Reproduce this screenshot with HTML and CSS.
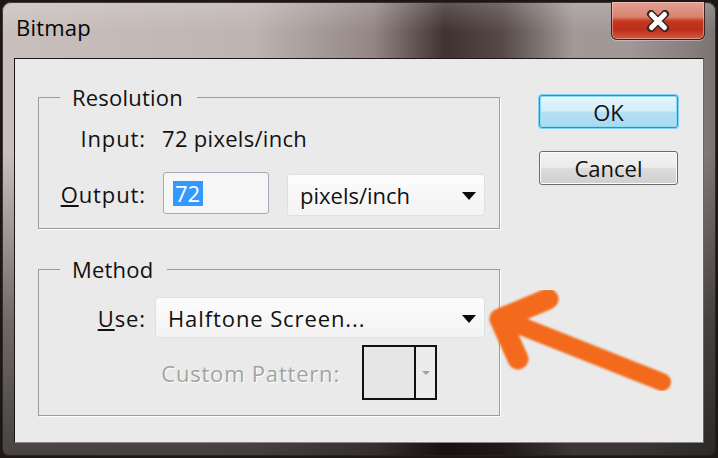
FILE: index.html
```html
<!DOCTYPE html>
<html>
<head>
<meta charset="utf-8">
<title>Bitmap</title>
<link rel="stylesheet" href="styles.css">
</head>
<body>
<div class="window">
  <div class="titlebar">
    <span class="title">Bitmap</span>
    <div class="close">
      <svg width="26" height="22" viewBox="0 0 26 22">
        <path d="M6 4 L20 18 M20 4 L6 18" stroke="#3b2522" stroke-width="8" stroke-linecap="round" fill="none"/>
        <path d="M6.5 4.5 L19.5 17.5 M19.5 4.5 L6.5 17.5" stroke="#ffffff" stroke-width="5" stroke-linecap="round" fill="none"/>
      </svg>
    </div>
  </div>
  <div class="client">
    <div class="groups">
      <fieldset class="group res">
        <legend>Resolution</legend>
        <div class="row input-row">
          <span class="lbl">Input:</span>
          <span class="val">72 pixels/inch</span>
        </div>
        <div class="row output-row">
          <span class="lbl"><u>O</u>utput:</span>
          <div class="textbox"><span class="sel">72</span></div>
          <div class="dropdown units"><span>pixels/inch</span><span class="caret"></span></div>
        </div>
      </fieldset>
      <fieldset class="group method">
        <legend>Method</legend>
        <div class="row use-row">
          <span class="lbl"><u>U</u>se:</span>
          <div class="dropdown use"><span class="usetext">Halftone Screen...</span><span class="caret"></span></div>
        </div>
        <div class="row pattern-row">
          <span class="plbl">Custom Pattern:</span>
          <div class="pattern">
            <div class="swatch"></div>
            <div class="pbtn"><span class="mini-caret"></span></div>
          </div>
        </div>
      </fieldset>
    </div>
    <div class="buttons">
      <div class="btn ok">OK</div>
      <div class="btn cancel">Cancel</div>
    </div>
  </div>
</div>
<svg class="arrow" width="718" height="458" viewBox="0 0 718 458">
  <defs>
    <filter id="soft" x="-10%" y="-10%" width="120%" height="120%"><feGaussianBlur stdDeviation="1.3"/></filter>
  </defs>
  <g fill="none" stroke="#f36a1a" stroke-linecap="round" stroke-linejoin="round" filter="url(#soft)">
    <path d="M548 299 L500 319 L518 359" stroke-width="21"/>
    <path d="M506 320 L662 382" stroke-width="18"/>
  </g>
</svg>
</body>
</html>
```

FILE: styles.css
```css
html, body {
  margin: 0;
  padding: 0;
}
body {
  width: 718px;
  height: 458px;
  overflow: hidden;
  position: relative;
  background: #1d1717;
  font-family: "Open Sans", "Noto Sans", sans-serif;
  font-size: 22px;
  color: #111;
}
.window {
  margin: 2px 0 0 2px;
  width: 714px;
  height: 454px;
  box-sizing: border-box;
  padding: 0 12px 13px 12px;
  border-radius: 9px 9px 7px 7px;
  display: flex;
  flex-direction: column;
  background:
    linear-gradient(180deg, rgba(255,255,255,0.18) 0px, rgba(255,255,255,0) 30px, rgba(0,0,0,0) 150px, rgba(0,0,0,0.45) 320px, rgba(0,0,0,0.65) 100%),
    linear-gradient(90deg, #c9c0bd 0%, #beb4b1 35%, #938684 52%, #3f3230 62%, #564947 70%, #a29997 80%, #a09896 88%, #7a7371 100%);
  background-color: #8a807e;
  box-shadow: inset 0 0 0 1px rgba(40,30,30,0.85);
}
.titlebar {
  height: 56px;
  flex: none;
  display: flex;
  justify-content: space-between;
  align-items: flex-start;
}
.title {
  padding: 12px 0 0 2px;
  line-height: 26px;
  color: #050505;
  letter-spacing: 0.2px;
}
.close {
  width: 94px;
  height: 38px;
  margin-right: -1px;
  box-sizing: border-box;
  border: 1px solid #3d2320;
  border-top: none;
  border-radius: 0 0 6px 6px;
  display: flex;
  align-items: center;
  justify-content: center;
  background: linear-gradient(180deg, #e3a294 0%, #d98270 40%, #c5361f 52%, #bb2f1a 75%, #d35a40 100%);
  box-shadow: inset 0 0 0 1px rgba(255,220,210,0.45), 0 1px 0 rgba(255,255,255,0.35);
}
.client {
  flex: 1;
  background: #eaeaea;
  border: 1px solid;
  border-color: #1c1616 #6f6565 #8c8484 #1c1616;
  display: flex;
  align-items: flex-start;
  padding-top: 26px;
}
.groups {
  margin-left: 23px;
  width: 462px;
  display: flex;
  flex-direction: column;
}
.group {
  margin: 0;
  padding: 0;
  border: 1px solid #9c9c9c;
  width: 462px;
  box-sizing: border-box;
  box-shadow: 1px 1px 0 #ffffff;
  min-inline-size: 0;
}
.group legend {
  margin-left: 21px;
  padding: 0 14px 0 12px;
  line-height: 24px;
  color: #111;
  letter-spacing: 0.2px;
}
.method {
  margin-top: 28px;
}
.res {
  padding-bottom: 12px;
}
.method {
  padding-bottom: 15px;
}
.row {
  display: flex;
  align-items: center;
}
.lbl {
  width: 107px;
  text-align: right;
  flex: none;
  letter-spacing: 0.9px;
}
.input-row {
  margin-top: 16px;
  height: 26px;
  line-height: 26px;
}
.input-row .val {
  margin-left: 16px;
  letter-spacing: 0.3px;
}
.output-row {
  margin-top: 21px;
  height: 44px;
}
.textbox {
  margin-left: 17px;
  width: 106px;
  height: 42px;
  align-self: flex-start;
  box-sizing: border-box;
  border: 1px solid #a3abb6;
  border-radius: 3px;
  background: #f6f6f6;
  display: flex;
  align-items: center;
  padding-left: 9px;
}
.sel {
  background: #3399ff;
  color: #fff;
  line-height: 25px;
  padding: 0 3px 0 2px;
}
.dropdown {
  height: 42px;
  box-sizing: border-box;
  border: 1px solid #e0e0e0;
  border-radius: 3px;
  background: linear-gradient(180deg, #fcfcfc 0%, #f3f3f3 100%);
  display: flex;
  align-items: center;
  justify-content: space-between;
  padding: 0 8px 0 12px;
}
.units {
  margin-left: 18px;
  width: 198px;
  align-self: flex-end;
}
.caret {
  width: 0;
  height: 0;
  border-left: 7.5px solid transparent;
  border-right: 7.5px solid transparent;
  border-top: 8px solid #0a0a0a;
  margin-top: 2px;
}
.use-row {
  margin-top: 16px;
  height: 41px;
}
.use {
  margin-left: 9px;
  width: 330px;
  height: 41px;
}
.usetext {
  letter-spacing: 0.9px;
}
.pattern-row {
  margin-top: 7px;
  height: 55px;
}
.plbl {
  width: 301px;
  text-align: right;
  color: #a3a3a3;
  text-shadow: 1px 1px 0 #ffffff;
  flex: none;
  letter-spacing: 0.8px;
}
.pattern {
  margin-left: 22px;
  width: 75px;
  height: 55px;
  box-sizing: border-box;
  border: 2px solid #111;
  display: flex;
}
.swatch {
  flex: 1;
  background: #e6e6e6;
}
.pbtn {
  width: 21px;
  box-sizing: border-box;
  border-left: 2px solid #111;
  background: #ececec;
  display: flex;
  align-items: center;
  justify-content: center;
}
.mini-caret {
  width: 0;
  height: 0;
  border-left: 4px solid transparent;
  border-right: 4px solid transparent;
  border-top: 4px solid #a0a0a0;
}
.buttons {
  margin-left: 39px;
  width: 139px;
  padding-top: 10px;
  display: flex;
  flex-direction: column;
}
.btn {
  box-sizing: border-box;
  border-radius: 3px;
  display: flex;
  align-items: center;
  justify-content: center;
  color: #111;
  line-height: 26px;
}
.ok {
  height: 33px;
  border: 1px solid #3a8cb8;
  background: linear-gradient(180deg, #e6f5fc 0%, #d2edfa 48%, #b5e0f5 52%, #a9daf3 100%);
  box-shadow: 0 0 0 1px #7fd2f0, inset 0 0 0 1px #8fdaf5;
}
.cancel {
  margin-top: 23px;
  height: 34px;
  border: 1px solid #6b6b6b;
  background: linear-gradient(180deg, #f3f3f3 0%, #ebebeb 48%, #dcdcdc 52%, #cfcfcf 100%);
  box-shadow: inset 0 0 0 1px #fbfbfb;
}
.arrow {
  position: absolute;
  left: 0;
  top: 0;
  pointer-events: none;
}
```
